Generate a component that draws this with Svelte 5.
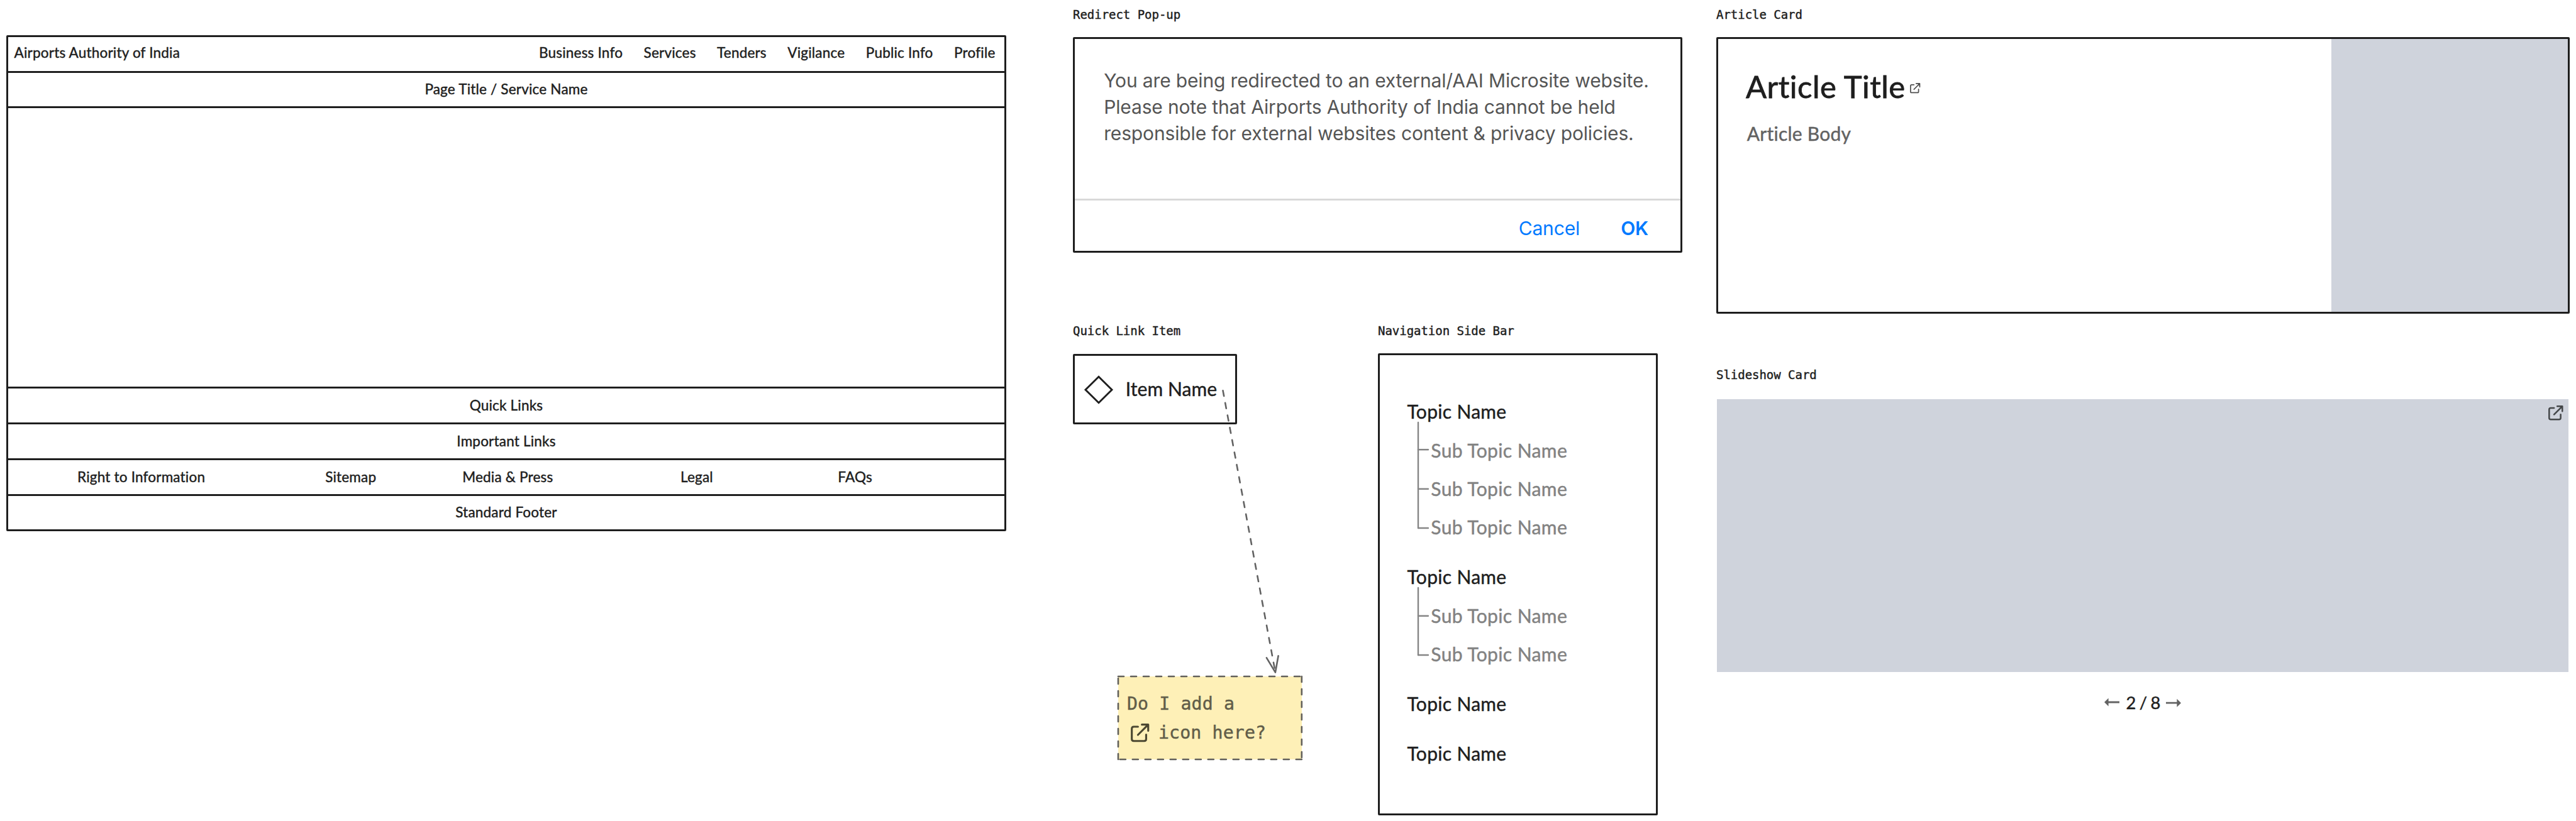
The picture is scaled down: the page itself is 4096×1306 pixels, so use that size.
<script>
  const menu = ['Business Info', 'Services', 'Tenders', 'Vigilance', 'Public Info', 'Profile'];
  const footerLinks = ['Right to Information', 'Sitemap', 'Media & Press', 'Legal', 'FAQs'];
  // Each topic carries its sub-topic count and the y positions of its tree branches.
  const topics = [
    { subs: 3, branches: [43.3, 105.7, 168] },
    { subs: 2, branches: [44.8, 107] },
    { subs: 0, branches: [] },
    { subs: 0, branches: [] }
  ];
</script>

{#snippet external(kind)}
  <svg class="external {kind}" viewBox="143 101 160 160" aria-hidden="true">
    <path d="M205 128H169Q152 128 152 145V235Q152 252 169 252H259Q276 252 276 235V197" />
    <path d="M239 110H294V163M205 199L290 114" />
    <path class="tip" d="M268 110H294V136Z" />
  </svg>
{/snippet}

<main class="board">
  <section class="site">
    <header class="row top">
      <span>Airports Authority of India</span>
      <nav>{#each menu as item}<span>{item}</span>{/each}</nav>
    </header>
    <div class="row title">Page Title / Service Name</div>
    <div class="row content"></div>
    <div class="row">Quick Links</div>
    <div class="row">Important Links</div>
    <div class="row links">{#each footerLinks as link}<span>{link}</span>{/each}</div>
    <footer class="row last">Standard Footer</footer>
  </section>

  <div class="middle">
    <section>
      <h2>Redirect Pop-up</h2>
      <div class="popup frame">
        <p>
          You are being redirected to an external/AAI Microsite website.<br />
          Please note that Airports Authority of India cannot be held<br />
          responsible for external websites content &amp; privacy policies.
        </p>
        <div class="actions"><span>Cancel</span><strong>OK</strong></div>
      </div>
    </section>

    <div class="pair">
      <section class="quick">
        <h2>Quick Link Item</h2>
        <div class="item frame">
          <svg class="diamond" viewBox="0 0 48 48" aria-hidden="true"><path d="M24 3.2L45 24L24 44.8L3 24Z" /></svg>
          <span>Item Name</span>
        </div>
        <svg class="arrow" viewBox="1940 610 110 470" aria-hidden="true">
          <path class="dashed" d="M1944.5 621.2L2027.9 1069.6" />
          <path d="M2013.9 1046.4L2027.9 1069.6L2032.6 1043.3" />
        </svg>
        <aside class="note">
          <svg class="outline" viewBox="-2 -2 296 136" aria-hidden="true">
            <path d="M0 0H291.8" />
            <path d="M291.8 0V132" />
            <path d="M291.8 132H0" />
            <path d="M0 132V0" />
          </svg>
          <div>Do I add a</div>
          <div class="second">{@render external('on-note')}icon here?</div>
        </aside>
      </section>

      <section class="sidebar">
        <h2>Navigation Side Bar</h2>
        <div class="tree frame">
          {#each topics as topic}
            <div class="topic">
              <div>Topic Name</div>
              {#if topic.subs}
                <div class="subs">
                  {#each { length: topic.subs } as _}<div>Sub Topic Name</div>{/each}
                </div>
                <svg class="branches" viewBox="0 0 24 180" aria-hidden="true">
                  <path d="M3 0V{topic.branches[topic.branches.length - 1]}" />
                  {#each topic.branches as y}<path d="M3 {y}H18.9" />{/each}
                </svg>
              {/if}
            </div>
          {/each}
        </div>
      </section>
    </div>
  </div>

  <div class="right">
    <section>
      <h2>Article Card</h2>
      <article class="card frame">
        <div class="text">
          <h1>Article Title{@render external('on-title')}</h1>
          <p>Article Body</p>
        </div>
        <div class="media"></div>
      </article>
    </section>
    <section class="show">
      <h2>Slideshow Card</h2>
      <div class="slide">{@render external('on-slide')}</div>
      <div class="pager">
        <svg viewBox="0 0 25 14" aria-hidden="true"><path d="M0 6L6.6 -0.5V4.6H24V7.4H6.6V12.5Z" /></svg>
        <span>2 / 8</span>
        <svg viewBox="0 0 25 14" aria-hidden="true"><path d="M24 7.2L17.4 .7V5.8H0V8.6H17.4V13.7Z" /></svg>
      </div>
    </section>
  </div>
</main>

<style>
  :global(body) { margin: 0; background: #fff; }
  * { box-sizing: border-box; }
  svg { fill: none; overflow: visible; display: block; flex: none; }
  h1, h2, p { margin: 0; font-weight: 400; }

  .board {
    width: 4096px;
    height: 1306px;
    overflow: hidden;
    display: grid;
    grid-template-columns: 1590px 969px 1357px;
    column-gap: 54px;
    padding-left: 10px;
    background: #fff;
    color: #1e1e1e;
    font-family: Lato, "Noto Sans", sans-serif;
    -webkit-text-stroke: .45px currentColor;
    white-space: nowrap;
  }
  .frame { border: 3px solid #1e1e1e; border-radius: 2px; }
  h2 { font: 19px/24px "DejaVu Sans Mono", monospace; letter-spacing: -.03px; }

  .site {
    margin-top: 56px;
    height: 789px;
    border: 3px solid #1e1e1e;
    border-radius: 2px;
    font-size: 22.5px;
    letter-spacing: .2px;
  }
  .row {
    height: 57px;
    display: flex;
    align-items: center;
    justify-content: center;
    padding-bottom: 2px;
    border-bottom: 3px solid #1e1e1e;
  }
  .row.top { justify-content: space-between; padding: 0 14.5px 6px 9.6px; }
  .row.top nav { display: flex; gap: 33.5px; }
  .row.title { height: 56px; padding-bottom: 3px; }
  .row.content { height: 446px; }
  .row.last { height: 53px; border-bottom: 0; }
  .row.links {
    display: grid;
    grid-template-columns: 423.3px 242.8px 256.4px 345px 158.2px;
    justify-content: start;
    text-align: center;
  }

  .middle { padding-top: 11px; margin-left: 52px; width: 969px; }
  .right { padding-top: 11px; margin-left: 52px; width: 1357px; }
  .middle h2, .right h2 { height: 24px; }
  .popup {
    margin-top: 24px;
    height: 343px;
    display: flex;
    flex-direction: column;
    font-family: Inter, sans-serif;
    font-size: 30px;
    letter-spacing: -.15px;
    -webkit-text-stroke: 0;
  }
  .popup p { height: 254px; padding: 44.6px 0 0 46.2px; line-height: 42.15px; color: #555; }
  .actions {
    flex: 1;
    border-top: 3px solid #d9d9d9;
    display: flex;
    align-items: center;
    justify-content: flex-end;
    gap: 65px;
    padding: 8px 51px 0 0;
    color: #007aff;
  }
  .actions strong { font-weight: 600; }

  .pair { display: flex; justify-content: space-between; margin-top: 111.5px; width: 930px; }
  .quick { width: 261px; position: relative; }
  .item {
    margin-top: 25px;
    height: 112px;
    display: flex;
    align-items: center;
    padding: 2px 0 0 13.7px;
    font-size: 30px;
  }
  .item span { margin-left: 19px; padding-bottom: 3px; letter-spacing: .1px; }
  .diamond { width: 48px; height: 48px; }
  .diamond path { stroke: #1e1e1e; stroke-width: 2.9; }
  .arrow { position: absolute; left: 234px; top: 96.5px; width: 110px; height: 470px; }
  .arrow path { stroke: #626262; stroke-width: 2.6; stroke-linecap: round; stroke-linejoin: round; }
  .arrow .dashed { stroke-dasharray: 9 11; }
  .note {
    position: absolute;
    left: 72.3px;
    top: 562.1px;
    width: 291.8px;
    height: 132px;
    padding: 21px 0 0 13.6px;
    background: #fef0b7;
    color: #615d49;
    font: 28.2px/46.2px "DejaVu Sans Mono", monospace;
    letter-spacing: .15px;
  }
  .outline { position: absolute; left: -2px; top: -2px; width: 296px; height: 136px; }
  .outline path { stroke: #62605b; stroke-width: 2.6; stroke-linecap: round; stroke-dasharray: 9 11; }
  .second { display: flex; align-items: center; }

  .external { stroke: currentColor; stroke-width: 17; stroke-linecap: round; stroke-linejoin: round; }
  .external .tip { fill: currentColor; stroke-width: 6; }
  .on-note { width: 29.4px; height: 29.4px; margin: 0 14.5px 0 6.2px; color: #4c4832; }
  .on-title { width: 16.4px; height: 16.4px; margin: 6px 0 0 7.5px; color: #505050; }
  .on-slide { width: 23.6px; height: 23.6px; color: #434648; }

  .sidebar { width: 445px; }
  .tree {
    margin-top: 24px;
    height: 735px;
    padding: 69px 0 0 43.5px;
    font-size: 30px;
    line-height: 40px;
    letter-spacing: .3px;
  }
  .topic { position: relative; margin-bottom: 39px; }
  .subs { display: grid; gap: 21.2px; padding: 22.2px 0 0 37.8px; color: #828282; letter-spacing: .4px; }
  .branches { position: absolute; left: 14.2px; top: 38px; width: 24px; height: 180px; }
  .branches path { stroke: #858585; stroke-width: 2.4; stroke-linecap: round; }

  .card { margin-top: 24px; height: 440px; display: flex; }
  .text { flex: 1; padding: 46px 0 0 44px; }
  h1 { display: flex; align-items: center; font-size: 49px; line-height: 58px; letter-spacing: .45px; -webkit-text-stroke-width: .8px; }
  .text p { margin: 26px 0 0 1.8px; font-size: 30px; line-height: 40px; letter-spacing: .25px; color: #626262; }
  .media { width: 376px; background: #cfd3dc; }
  .show { margin-top: 84.5px; }
  .slide {
    margin: 27px 0 0 1px;
    width: 1354px;
    height: 434px;
    background: #cfd3dc;
    display: flex;
    justify-content: flex-end;
    padding: 10px 8.5px 0 0;
  }
  .pager { margin: 29px 0 0 617.3px; display: flex; align-items: center; font-size: 27.3px; line-height: 40px; }
  .pager svg { width: 25px; height: 14px; }
  .pager path { fill: #636363; }
  .pager span { width: 72.4px; text-align: center; letter-spacing: -.8px; }
</style>
